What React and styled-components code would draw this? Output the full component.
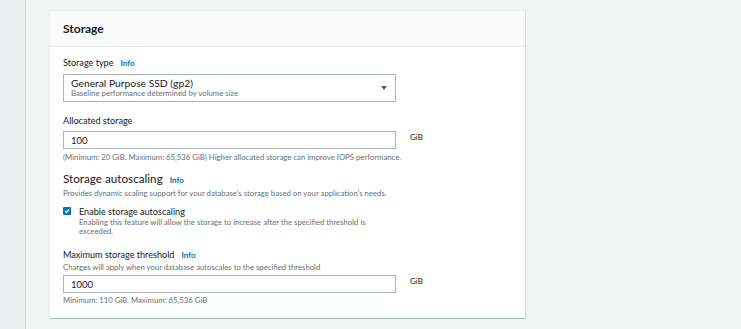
import React from "react";
import styled, { createGlobalStyle } from "styled-components";

const GlobalStyle = createGlobalStyle`
  body {
    margin: 0;
    background-color: #f2f3f3;
    font-family: Lato, "Open Sans", sans-serif;
    color: #16191f;
  }
`;

const Page = styled.div`
  display: flex;
  min-height: 329px;
`;

const SideStrip = styled.div`
  width: 25px;
  background-color: #eaeded;
  border-right: 1px solid #d5dbdb;
`;

const Main = styled.div`
  flex: 1;
  padding: 10px 0 0 23px;
`;

const Card = styled.div`
  width: 475px;
  background-color: white;
  border: 1px solid #eaeded;
  border-bottom: 1px solid #aab7b8;
  border-right: 1px solid #d5dbdb;
`;

const CardHeader = styled.div`
  display: flex;
  align-items: center;
  height: 35px;
  padding: 0 13px;
  background-color: #fafafa;
  border-bottom: 1px solid #eaeded;
  font-size: 12px;
  font-weight: 700;
`;

const CardBody = styled.div`
  display: flex;
  flex-direction: column;
  padding: 9px 13px 13px;
`;

const Field = styled.div`
  display: flex;
  flex-direction: column;
  margin-bottom: ${(props) => props.gap || 0}px;
`;

const Label = styled.div`
  display: flex;
  align-items: baseline;
  gap: 7px;
  font-size: 9.1px;
  line-height: 14px;
`;

const Heading = styled.div`
  display: flex;
  align-items: baseline;
  gap: 7px;
  font-size: 11.7px;
  line-height: 16px;
`;

const InfoLink = styled.span`
  color: #0073bb;
  font-weight: 700;
  font-size: 8px;
`;

const Hint = styled.div`
  color: #687078;
  font-size: 7.75px;
  line-height: ${(props) => props.lh || 10}px;
  margin-top: ${(props) => props.top || 0}px;
`;

const SelectBox = styled.div`
  display: flex;
  align-items: center;
  justify-content: space-between;
  width: 333px;
  height: 28px;
  margin-top: 4px;
  padding: 0 8px 0 7px;
  box-sizing: border-box;
  border: 1px solid #aab7b8;
`;

const SelectText = styled.div`
  display: flex;
  flex-direction: column;
`;

const SelectValue = styled.span`
  font-size: 10.3px;
  line-height: 11px;
`;

const SelectSub = styled.span`
  font-size: 7.8px;
  line-height: 9px;
  color: #687078;
`;

const Caret = styled.span`
  width: 0;
  height: 0;
  border-left: 3px solid transparent;
  border-right: 3px solid transparent;
  border-top: 4px solid #545b64;
`;

const InputRow = styled.div`
  display: flex;
  align-items: flex-start;
  gap: 14px;
  margin-top: ${(props) => props.top || 0}px;
`;

const TextInput = styled.div`
  display: flex;
  align-items: center;
  width: 333px;
  height: 18px;
  padding: 0 7px;
  box-sizing: border-box;
  border: 1px solid #aab7b8;
  font-size: 9.5px;
`;

const Unit = styled.span`
  font-size: 8px;
  line-height: 10px;
  margin-top: 1px;
`;

const CheckRow = styled.div`
  display: flex;
  gap: 8px;
  margin-top: 7px;
`;

const CheckBox = styled.span`
  display: flex;
  align-items: center;
  justify-content: center;
  flex-shrink: 0;
  width: 8px;
  height: 8px;
  margin-top: 2px;
  border-radius: 1px;
  background-color: #0073bb;
`;

const CheckText = styled.div`
  display: flex;
  flex-direction: column;
  width: 320px;
`;

const CheckLabel = styled.span`
  font-size: 9.1px;
  line-height: 13px;
`;

function App() {
  return (
    <>
      <GlobalStyle />
      <Page>
        <SideStrip />
        <Main>
          <Card>
            <CardHeader>Storage</CardHeader>
            <CardBody>
              <Field gap={12}>
                <Label>
                  Storage type <InfoLink>Info</InfoLink>
                </Label>
                <SelectBox>
                  <SelectText>
                    <SelectValue>General Purpose SSD (gp2)</SelectValue>
                    <SelectSub>Baseline performance determined by volume size</SelectSub>
                  </SelectText>
                  <Caret />
                </SelectBox>
              </Field>

              <Field gap={8}>
                <Label>Allocated storage</Label>
                <InputRow top={3}>
                  <TextInput>100</TextInput>
                  <Unit>GiB</Unit>
                </InputRow>
                <Hint top={3}>
                  (Minimum: 20 GiB. Maximum: 65,536 GiB) Higher allocated storage can
                  improve IOPS performance.
                </Hint>
              </Field>

              <Field gap={12}>
                <Heading>
                  Storage autoscaling <InfoLink>Info</InfoLink>
                </Heading>
                <Hint>
                  Provides dynamic scaling support for your database's storage based on
                  your application's needs.
                </Hint>
                <CheckRow>
                  <CheckBox>
                    <svg width="6" height="6" viewBox="0 0 6 6">
                      <path d="M1 3 L2.5 4.5 L5 1.5" fill="none" stroke="white" strokeWidth="1.2" />
                    </svg>
                  </CheckBox>
                  <CheckText>
                    <CheckLabel>Enable storage autoscaling</CheckLabel>
                    <Hint lh={9}>
                      Enabling this feature will allow the storage to increase after the
                      specified threshold is exceeded.
                    </Hint>
                  </CheckText>
                </CheckRow>
              </Field>

              <Field>
                <Label>
                  Maximum storage threshold <InfoLink>Info</InfoLink>
                </Label>
                <Hint>Charges will apply when your database autoscales to the specified threshold</Hint>
                <InputRow top={3}>
                  <TextInput>1000</TextInput>
                  <Unit>GiB</Unit>
                </InputRow>
                <Hint top={2}>Minimum: 110 GiB. Maximum: 65,536 GiB</Hint>
              </Field>
            </CardBody>
          </Card>
        </Main>
      </Page>
    </>
  );
}

export default App;
